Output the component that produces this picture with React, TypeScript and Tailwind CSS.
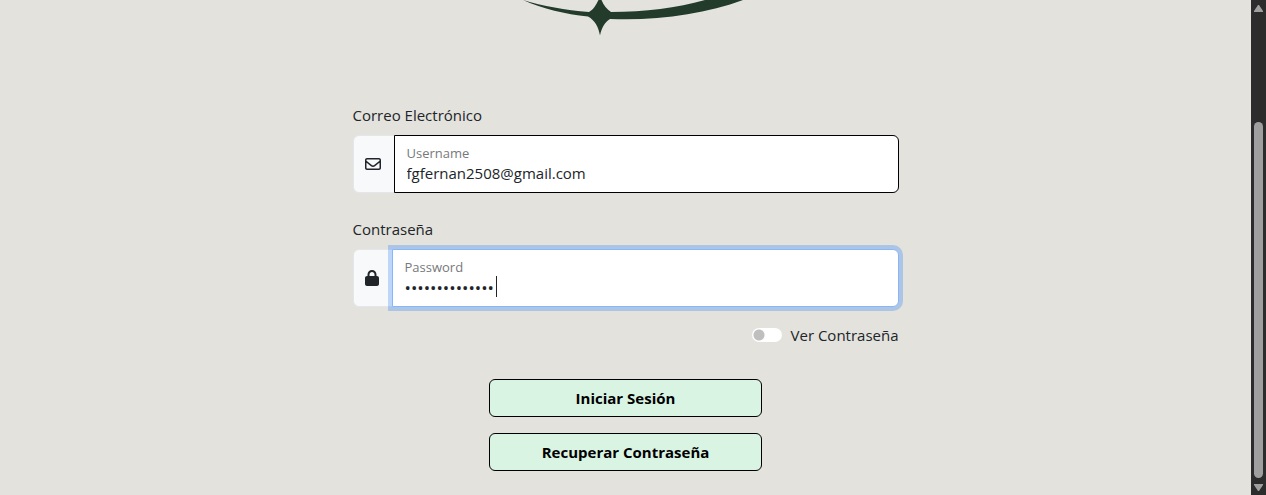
import { useState } from "react";
import type { ReactNode } from "react";
import { FaLock, FaRegEnvelope } from "react-icons/fa6";

function Emblem() {
  return (
    <svg
      viewBox="0 0 222 36"
      className="h-9 w-[222px] text-[#223b2a]"
      fill="currentColor"
      aria-hidden="true"
    >
      <path d="M0 0C20 6 42 10 66 12C70 10 73 5 75.500 0H78.500C80.500 5 84 9.500 88 12C122 12 154 8 182 0H220C182 14 134 21 87 19C82 22 78.500 28 77 35.500C75.500 27 72 20.500 65 16.500C42 14 20 9 0 0Z" />
    </svg>
  );
}

type FieldProps = {
  id: string;
  label: string;
  hint: string;
  icon: ReactNode;
  children: ReactNode;
};

function Field({ id, label, hint, icon, children }: FieldProps) {
  return (
    <div className="mb-6">
      <label htmlFor={id} className="mb-2 block leading-6">
        {label}
      </label>
      <div className="flex">
        <span className="flex items-center rounded-l-md border border-[#e3e6ea] bg-[#f8f9fa] pr-[13px] pl-[11px] text-base">
          {icon}
        </span>
        <div className="relative -ml-px flex-1">
          {children}
          <label
            htmlFor={id}
            className="absolute top-2 left-[13px] text-[13px] leading-5 text-[#78797b]"
          >
            {hint}
          </label>
        </div>
      </div>
    </div>
  );
}

function ScrollRail() {
  return (
    <div
      className="sticky top-0 flex h-screen w-[15px] shrink-0 flex-col items-center bg-[#2c2c2c] text-[#9f9f9f]"
      aria-hidden="true"
    >
      <svg viewBox="0 0 15 17" className="h-[17px] w-[15px]" fill="currentColor">
        <path d="M7 5h1l4 6v1H3v-1z" />
      </svg>
      <div className="grow-[105] basis-0" />
      <div className="w-[9px] grow-[355] basis-0 rounded-full bg-[#9f9f9f]" />
      <svg viewBox="0 0 15 17" className="h-[17px] w-[15px]" fill="currentColor">
        <path d="M3 6h9v1l-4 6H7l-4-6z" />
      </svg>
    </div>
  );
}

const inputClass =
  "block h-[58px] w-full rounded-r-md border bg-white px-3 pt-[22px] pb-1 outline-none";

const buttonClass =
  "h-[38px] w-1/2 rounded-md border border-black bg-[#daf4e4] text-[15px] font-bold text-black";

export default function App() {
  const [email, setEmail] = useState("fgfernan2508@gmail.com");
  const [password, setPassword] = useState("contrasena2508");
  const [visible, setVisible] = useState(false);

  return (
    <div className="flex min-h-screen bg-[#e3e2dd] font-['Open_Sans','Noto_Sans',sans-serif] text-[15px] text-[#212529]">
      <main className="flex flex-1 flex-col items-center">
        <div className="flex w-[546px] max-w-full flex-col">
          <div className="mb-[67px] ml-[170px]">
            <Emblem />
          </div>
          <form onSubmit={(e) => e.preventDefault()}>
            <Field
              id="email"
              label="Correo Electrónico"
              hint="Username"
              icon={<FaRegEnvelope />}
            >
              <input
                id="email"
                type="email"
                value={email}
                onChange={(e) => setEmail(e.target.value)}
                className={`${inputClass} border-black`}
              />
            </Field>
            <Field
              id="password"
              label="Contraseña"
              hint="Password"
              icon={<FaLock className="w-3.5" />}
            >
              <input
                id="password"
                type={visible ? "text" : "password"}
                value={password}
                onChange={(e) => setPassword(e.target.value)}
                className={`${inputClass} border-[#86b7fe] text-[17px] ring-4 ring-[#0d6efd]/25`}
              />
              <span className="absolute top-[27px] left-[104px] h-[21px] w-px bg-[#212529]" />
            </Field>
            <div className="-mt-2 mb-8 flex items-center justify-end gap-[9px] leading-6">
              <input
                id="show"
                type="checkbox"
                role="switch"
                checked={visible}
                onChange={(e) => setVisible(e.target.checked)}
                className="h-[14px] w-[30px] appearance-none rounded-full bg-white bg-[radial-gradient(circle_at_7px_7px,#bfbfbf_5px,transparent_6px)] checked:bg-[radial-gradient(circle_at_23px_7px,#223b2a_5px,transparent_6px)]"
              />
              <label htmlFor="show">Ver Contraseña</label>
            </div>
            <div className="flex flex-col items-center gap-4 pb-6">
              <button type="submit" className={buttonClass}>
                Iniciar Sesión
              </button>
              <button type="button" className={buttonClass}>
                Recuperar Contraseña
              </button>
            </div>
          </form>
        </div>
      </main>
      <ScrollRail />
    </div>
  );
}
